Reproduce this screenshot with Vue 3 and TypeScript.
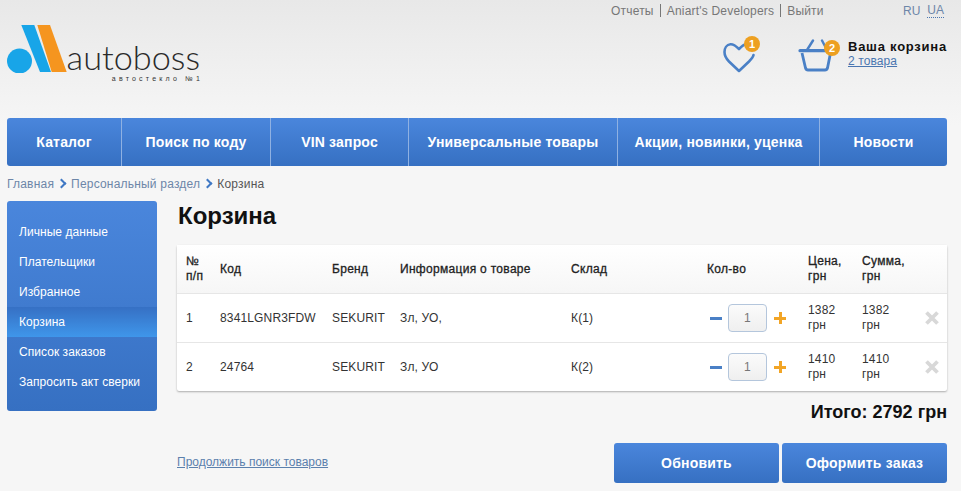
<template>
  <div class="page">
    <div class="top">
      <nav class="toplinks">
        <a>Отчеты</a><i></i><a>Aniart's Developers</a><i></i><a>Выйти</a>
      </nav>
      <div class="langs"><a>RU</a><a class="cur">UA</a></div>
    </div>

    <header class="head">
      <div class="logo">
        <svg class="mark" width="60" height="48" viewBox="0 0 60 48">
          <circle cx="12.500" cy="36" r="12.500" fill="#18a5e8" />
          <path d="M14.300 0H27.300L44 47H33Z" fill="#18a5e8" />
          <path d="M30.300 0H43L59.700 47H44.700Z" fill="#f5951f" />
        </svg>
        <div class="word">
          <span class="name">autoboss</span>
          <span class="tag">автостекло №1</span>
        </div>
      </div>
      <div class="fav">
        <svg width="34" height="32" viewBox="0 0 34 32">
          <path d="M23 3.500C21 4 19 6 17 8 14 5 11 3 8.500 3.200 4.500 3.600 2.500 7.500 2.500 11 2.500 15 4.500 18 7 20.500L17 30 27 20.500C29 18.500 31 16.500 31.500 14" fill="none" stroke="#4a80c6" stroke-width="2.600" stroke-linecap="round" stroke-linejoin="round" />
        </svg>
        <b class="badge heart">1</b>
      </div>
      <div class="basket">
        <svg width="36" height="34" viewBox="0 0 36 34">
          <path d="M9 11 15 1.500M29 11 24 1.500" fill="none" stroke="#4a80c6" stroke-width="2.400" stroke-linecap="round" />
          <path d="M2 11.700H33" fill="none" stroke="#4a80c6" stroke-width="3.200" stroke-linecap="round" />
          <path d="M4 14 7.500 29C7.900 30.300 8.500 31 10 31H27C28.500 31 29.100 30.300 29.500 29L32.500 14" fill="none" stroke="#4a80c6" stroke-width="2.800" stroke-linejoin="round" />
        </svg>
        <b class="badge bask">2</b>
      </div>
      <div class="cartinfo">
        <b>Ваша корзина</b>
        <a>2 товара</a>
      </div>
    </header>

    <nav class="menu">
      <a v-for="m in menu" :key="m.t" :style="{ width: m.w + 'px' }">{{ m.t }}</a>
    </nav>

    <div class="crumbs">
      <a>Главная</a><span class="arr"></span><a>Персональный раздел</a><span class="arr"></span><span class="here">Корзина</span>
    </div>

    <div class="body">
      <aside class="side">
        <a v-for="s in side" :key="s" :class="{ active: s === 'Корзина' }">{{ s }}</a>
      </aside>
      <main class="main">
        <h1>Корзина</h1>
        <div class="tablewrap">
          <div class="row hd">
            <div class="c1">№<br />п/п</div>
            <div class="c2">Код</div>
            <div class="c3">Бренд</div>
            <div class="c4">Информация о товаре</div>
            <div class="c5">Склад</div>
            <div class="c6">Кол-во</div>
            <div class="c7">Цена,<br />грн</div>
            <div class="c8">Сумма,<br />грн</div>
            <div class="c9"></div>
          </div>
          <div v-for="r in rows" :key="r.n" class="row">
            <div class="c1">{{ r.n }}</div>
            <div class="c2">{{ r.code }}</div>
            <div class="c3">SEKURIT</div>
            <div class="c4">{{ r.info }}</div>
            <div class="c5">{{ r.stock }}</div>
            <div class="c6 qty">
              <span class="minus"></span>
              <span class="num">1</span>
              <span class="plus"></span>
            </div>
            <div class="c7">{{ r.price }}<br />грн</div>
            <div class="c8">{{ r.price }}<br />грн</div>
            <div class="c9">
              <svg width="14" height="14" viewBox="0 0 14 14"><path d="M1.500 1.500 12.500 12.500M12.500 1.500 1.500 12.500" stroke="#d8d8d8" stroke-width="3.800" /></svg>
            </div>
          </div>
        </div>
        <div class="total">Итого: 2792 грн</div>
        <div class="foot">
          <a class="cont">Продолжить поиск товаров</a>
          <div class="btns">
            <a class="btn b1">Обновить</a>
            <a class="btn b2">Оформить заказ</a>
          </div>
        </div>
      </main>
    </div>
  </div>
</template>

<script setup lang="ts">
const menu: { t: string; w: number }[] = [
  { t: 'Каталог', w: 115 },
  { t: 'Поиск по коду', w: 149 },
  { t: 'VIN запрос', w: 138 },
  { t: 'Универсальные товары', w: 209 },
  { t: 'Акции, новинки, уценка', w: 202 },
  { t: 'Новости', w: 127 },
]
const side: string[] = ['Личные данные', 'Плательщики', 'Избранное', 'Корзина', 'Список заказов', 'Запросить акт сверки']
const rows = [
  { n: 1, code: '8341LGNR3FDW', info: 'Зл, УО,', stock: 'К(1)', price: 1382 },
  { n: 2, code: '24764', info: 'Зл, УО', stock: 'К(2)', price: 1410 },
]
</script>

<style>
html, body { margin: 0; padding: 0; background: #f6f6f6; }
</style>

<style scoped>
.page {
  width: 961px;
  height: 491px;
  overflow: hidden;
  box-sizing: border-box;
  font-family: "Liberation Sans", Arial, sans-serif;
  font-size: 12px;
  color: #333;
  background: linear-gradient(#e8e8e8 0, #f6f6f6 125px);
}
.top { height: 21px; display: flex; align-items: center; padding-left: 611px; font-size: 12px; color: #777; }
.toplinks { display: flex; align-items: center; width: 292px; letter-spacing: 0.2px; }
.toplinks i { width: 1px; height: 13px; background: #777; margin: 0 6px; }
.langs { display: flex; gap: 7px; color: #6d86a8; }
.langs .cur { border-bottom: 1px dotted #4a76b0; line-height: 13px; }
.head { height: 97px; position: relative; display: flex; }
.logo { width: 695px; height: 70px; padding: 4px 0 0 7px; box-sizing: border-box; display: flex; align-items: flex-start; }
.mark { flex: none; }
.word { margin: 18px 0 0 2px; display: flex; flex-direction: column; align-items: flex-end; width: 131px; }
.name { font-family: Lato, sans-serif; font-weight: 300; font-size: 34.300px; line-height: 28px; color: #2a2a2a; }
.tag { font-size: 7px; line-height: 7px; letter-spacing: 3.200px; color: #333; margin: 4px -3px 0 -10px; white-space: nowrap; }
.fav, .basket { position: relative; flex: none; }
.fav { width: 76px; height: 34px; margin: 20px 0 0 27px; }
.basket { width: 50px; height: 34px; margin: 18px 0 0 0; }
.badge {
  position: absolute; width: 16px; height: 16px; border-radius: 50%;
  background: #eda021; color: #fff; font-size: 11px; line-height: 16px; text-align: center; font-weight: 700;
}
.heart { left: 22px; top: -5px; }
.bask { left: 26px; top: 1px; }
.cartinfo { display: flex; flex-direction: column; margin-top: 18px; }
.cartinfo b { font-size: 13px; line-height: 15px; color: #111; letter-spacing: 0.75px; white-space: nowrap; }
.cartinfo a { font-size: 12px; line-height: 14px; color: #4a76b0; text-decoration: underline; letter-spacing: 0.1px; }
.menu {
  margin-left: 7px; width: 940px; height: 48px; display: flex; border-radius: 3px; overflow: hidden;
  background: linear-gradient(#4a86dc, #3670c2);
}
.menu a {
  box-sizing: border-box; flex: none; display: flex; align-items: center; justify-content: center;
  color: #fff; font-weight: 700; font-size: 14px; letter-spacing: 0.18px; border-right: 1px solid #8fb1e2;
}
.menu a:last-child { border-right: 0; }
.crumbs { height: 35px; margin-left: 7px; display: flex; align-items: center; font-size: 12px; color: #6d86a8; letter-spacing: 0.2px; }
.crumbs .here { color: #555; }
.arr { width: 5px; height: 5px; margin: 0 6px 0 4px; border-top: 2px solid #3f78c4; border-right: 2px solid #3f78c4; transform: rotate(45deg); }
.body { display: flex; margin-left: 7px; align-items: flex-start; }
.side {
  width: 150px; height: 210px; box-sizing: border-box; padding-top: 16px; border-radius: 3px;
  background: linear-gradient(#4a86dc, #3670c2); display: flex; flex-direction: column; flex: none;
}
.side a { height: 30px; line-height: 30px; padding-left: 12px; color: #fff; font-size: 12px; letter-spacing: 0.05px; }
.side a.active { background: linear-gradient(#3670c4, #3f96ea); }
.main { width: 770px; margin-left: 20px; }
h1 { margin: 0; height: 44px; font-size: 24px; line-height: 29px; font-weight: 700; color: #111; padding-left: 1px; }
.tablewrap { background: #fff; border-radius: 2px; box-shadow: 0 1px 2px rgba(0,0,0,.3); }
.row { display: flex; align-items: center; height: 49px; border-bottom: 1px solid #e6e6e6; box-sizing: border-box; line-height: 15px; color: #333; letter-spacing: 0.15px; }
.row:last-child { border-bottom: 0; height: 48px; }
.row.hd { height: 49px; color: #222; background: linear-gradient(#fff, #f6f6f6); -webkit-text-stroke: 0.3px #222; letter-spacing: 0.3px; }
.row > div { flex: none; box-sizing: border-box; }
.c1 { width: 43px; padding-left: 9px; }
.c2 { width: 112px; }
.c3 { width: 68px; }
.c4 { width: 171px; }
.c5 { width: 136px; }
.c6 { width: 101px; }
.c7 { width: 54px; }
.c8 { width: 55px; }
.c9 { width: 46px; display: flex; padding-left: 8px; }
.qty { display: flex; align-items: center; padding-left: 3px; }
.minus { width: 12px; height: 3px; background: #4a80c6; margin-right: 6px; }
.num { width: 39px; height: 28px; box-sizing: border-box; border: 1px solid #b4c6dc; border-radius: 4px; background: linear-gradient(#fbfbfb, #efefef); text-align: center; line-height: 26px; color: #777; }
.plus { width: 12px; height: 12px; margin-left: 7px; background:
  linear-gradient(#f2a526, #f2a526) center/12px 3px no-repeat,
  linear-gradient(#f2a526, #f2a526) center/3px 12px no-repeat; }
.total { text-align: right; font-size: 18px; font-weight: 700; color: #111; line-height: 20px; margin-top: 11px; }
.foot { display: flex; justify-content: space-between; align-items: center; margin-top: 21px; }
.cont { color: #5b80ad; text-decoration: underline; font-size: 12px; margin-top: -2px; }
.btns { display: flex; gap: 3px; }
.btn {
  width: 165px; height: 40px; border-radius: 3px; display: flex; align-items: center; justify-content: center;
  color: #fff; font-weight: 700; font-size: 14px; letter-spacing: 0.2px; background: linear-gradient(#4a86dc, #3670c2);
}
</style>
